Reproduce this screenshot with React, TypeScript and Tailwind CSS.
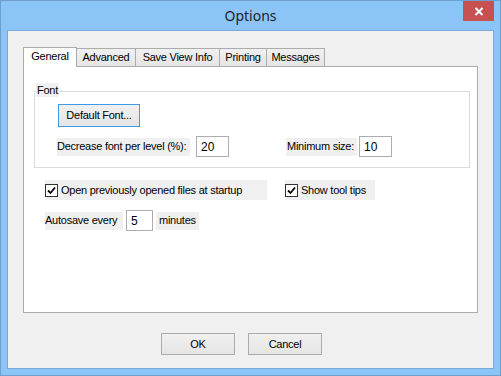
import React from "react";

const font = { fontFamily: '"Liberation Sans", Arial, sans-serif' };

function Check() {
  return (
    <div className="w-[13px] h-[13px] border border-[#333333] bg-white flex items-center justify-center shrink-0">
      <svg width="9" height="9" viewBox="0 0 9 9">
        <path d="M1 4.5 L3.5 7 L8 1.5" stroke="#000" strokeWidth="1.8" fill="none" />
      </svg>
    </div>
  );
}

function TextBox({ value, w }: { value: string; w: string }) {
  return (
    <div className={`${w} h-[21px] border border-[#abadb3] bg-white pl-[4px] flex items-center text-[12px] leading-none tracking-normal`}>
      {value}
    </div>
  );
}

function Btn({ label }: { label: string }) {
  return (
    <div className="h-[22px] w-[74px] border border-[#acacac] bg-gradient-to-b from-[#f0f0f0] to-[#e5e5e5] flex items-center justify-center text-[11px]">
      {label}
    </div>
  );
}

export default function App() {
  return (
    <div
      className="w-[501px] h-[376px] bg-[#8bc5f7] border border-[#6f9fcf] flex flex-col px-[6px] pb-[6px] text-black"
      style={font}
    >
      {/* title bar */}
      <div className="relative h-[29px] flex items-center justify-center">
        <span className="text-[14px] text-[#1e1e1e] mt-[-1px]" style={{ fontFamily: '"Noto Sans", "Open Sans", sans-serif' }}>
          Options
        </span>
        <div className="absolute right-0 top-0 w-[31px] h-[20px] bg-[#c75050] flex items-center justify-center">
          <svg width="10" height="9" viewBox="0 0 10 9">
            <path d="M1.5 1 L8.5 8 M8.5 1 L1.5 8" stroke="#fff" strokeWidth="2" />
          </svg>
        </div>
      </div>

      {/* client */}
      <div className="flex-1 bg-[#f0f0f0] border border-[#79a9d9] flex flex-col pt-[16px] pl-[15px] text-[11px] tracking-[-0.25px] whitespace-nowrap">
        {/* tabs */}
        <div className="flex items-end h-[19px]">
          <div className="relative z-10 w-[54px] h-[20px] mb-[-1px] bg-white border-l border-t border-r border-[#acacac] flex items-center justify-center pb-[3px]">
            General
          </div>
          <div className="w-[59px] h-[18px] border-t border-r border-[#acacac] bg-gradient-to-b from-[#f0f0f0] to-[#e5e5e5] flex items-center justify-center">
            Advanced
          </div>
          <div className="w-[84px] h-[18px] border-t border-r border-[#acacac] bg-gradient-to-b from-[#f0f0f0] to-[#e5e5e5] flex items-center justify-center">
            Save View Info
          </div>
          <div className="w-[47px] h-[18px] border-t border-r border-[#acacac] bg-gradient-to-b from-[#f0f0f0] to-[#e5e5e5] flex items-center justify-center">
            Printing
          </div>
          <div className="w-[58px] h-[18px] border-t border-r border-[#acacac] bg-gradient-to-b from-[#f0f0f0] to-[#e5e5e5] flex items-center justify-center">
            Messages
          </div>
        </div>

        {/* panel */}
        <div className="w-[455px] h-[247px] bg-white border border-[#acacac] flex flex-col">
          {/* group box */}
          <div className="relative ml-[10px] mt-[24px] w-[436px] h-[77px] border border-[#dcdcdc] flex flex-col">
            <div className="absolute left-[1px] top-[-9px] px-[1px] bg-[#f0f0f0] h-[14px] leading-[14px]">Font</div>
            <div className="ml-[23px] mt-[12px] w-[82px] h-[23px] border border-[#3c9ae8] bg-gradient-to-b from-[#f0f0f0] to-[#e5e5e5] flex items-center justify-center">
              Default Font...
            </div>
            <div className="flex items-center mt-[9px]">
              <div className="ml-[22px] w-[133px] h-[18px] bg-[#f0f0f0] flex items-center">Decrease font per level (%):</div>
              <div className="ml-[6px]">
                <TextBox value="20" w="w-[33px]" />
              </div>
              <div className="ml-[57px] w-[71px] h-[18px] bg-[#f0f0f0] flex items-center pl-[1px]">Minimum size:</div>
              <div className="ml-[2px]">
                <TextBox value="10" w="w-[33px]" />
              </div>
            </div>
          </div>

          {/* checkboxes */}
          <div className="flex mt-[12px] ml-[21px]">
            <div className="w-[222px] h-[20px] bg-[#f0f0f0] flex items-center gap-[3px]">
              <Check />
              <span>Open previously opened files at startup</span>
            </div>
            <div className="ml-[18px] w-[90px] h-[20px] bg-[#f0f0f0] flex items-center gap-[3px]">
              <Check />
              <span>Show tool tips</span>
            </div>
          </div>

          {/* autosave */}
          <div className="flex items-center mt-[10px] ml-[21px]">
            <div className="w-[78px] h-[18px] bg-[#f0f0f0] flex items-center">Autosave every</div>
            <div className="ml-[3px]">
              <TextBox value="5" w="w-[27px]" />
            </div>
            <div className="ml-[3px] w-[43px] h-[18px] bg-[#f0f0f0] flex items-center pl-[3px]">minutes</div>
          </div>
        </div>

        {/* buttons */}
        <div className="flex mt-[20px] ml-[138px] gap-[13px]">
          <Btn label="OK" />
          <Btn label="Cancel" />
        </div>
      </div>
    </div>
  );
}
